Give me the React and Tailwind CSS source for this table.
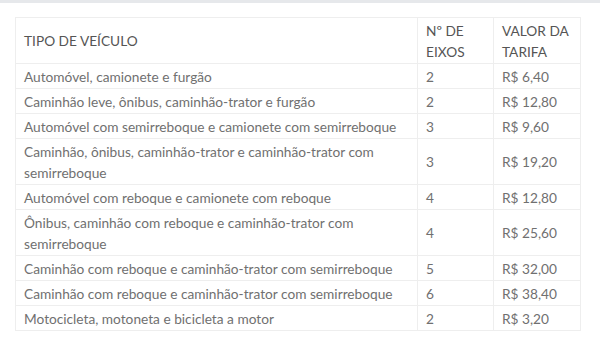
const rows = [
  ['Automóvel, camionete e furgão', '2', 'R$ 6,40'],
  ['Caminhão leve, ônibus, caminhão-trator e furgão', '2', 'R$ 12,80'],
  ['Automóvel com semirreboque e camionete com semirreboque', '3', 'R$ 9,60'],
  ['Caminhão, ônibus, caminhão-trator e caminhão-trator com semirreboque', '3', 'R$ 19,20'],
  ['Automóvel com reboque e camionete com reboque', '4', 'R$ 12,80'],
  ['Ônibus, caminhão com reboque e caminhão-trator com semirreboque', '4', 'R$ 25,60'],
  ['Caminhão com reboque e caminhão-trator com semirreboque', '5', 'R$ 32,00'],
  ['Caminhão com reboque e caminhão-trator com semirreboque', '6', 'R$ 38,40'],
  ['Motocicleta, motoneta e bicicleta a motor', '2', 'R$ 3,20'],
];

export default function App() {
  return (
    <div className="w-[600px] h-[347px] bg-white font-['Lato',sans-serif] text-[13.7px] text-[#707070]">
      <div className="h-[3px] bg-[#e6e8eb]" />
      <div className="pt-[14px] pl-[15px]">
        <table className="w-[566px] border-collapse leading-[21px]">
          <thead>
            <tr className="text-[#555]">
              <th className="w-[402px] border border-[#eeeeee] px-2 py-[1.5px] text-left font-normal">TIPO DE VEÍCULO</th>
              <th className="w-[76px] border border-[#eeeeee] px-2 py-[1.5px] text-left font-normal">Nº DE EIXOS</th>
              <th className="border border-[#eeeeee] px-2 py-[1.5px] text-left font-normal">VALOR DA TARIFA</th>
            </tr>
          </thead>
          <tbody>
            {rows.map(([tipo, eixos, valor], i) => (
              <tr key={i}>
                <td className="border border-[#eeeeee] px-2 py-[1.5px]">{tipo}</td>
                <td className="border border-[#eeeeee] px-2 py-[1.5px]">{eixos}</td>
                <td className="border border-[#eeeeee] px-2 py-[1.5px]">{valor}</td>
              </tr>
            ))}
          </tbody>
        </table>
      </div>
    </div>
  );
}
